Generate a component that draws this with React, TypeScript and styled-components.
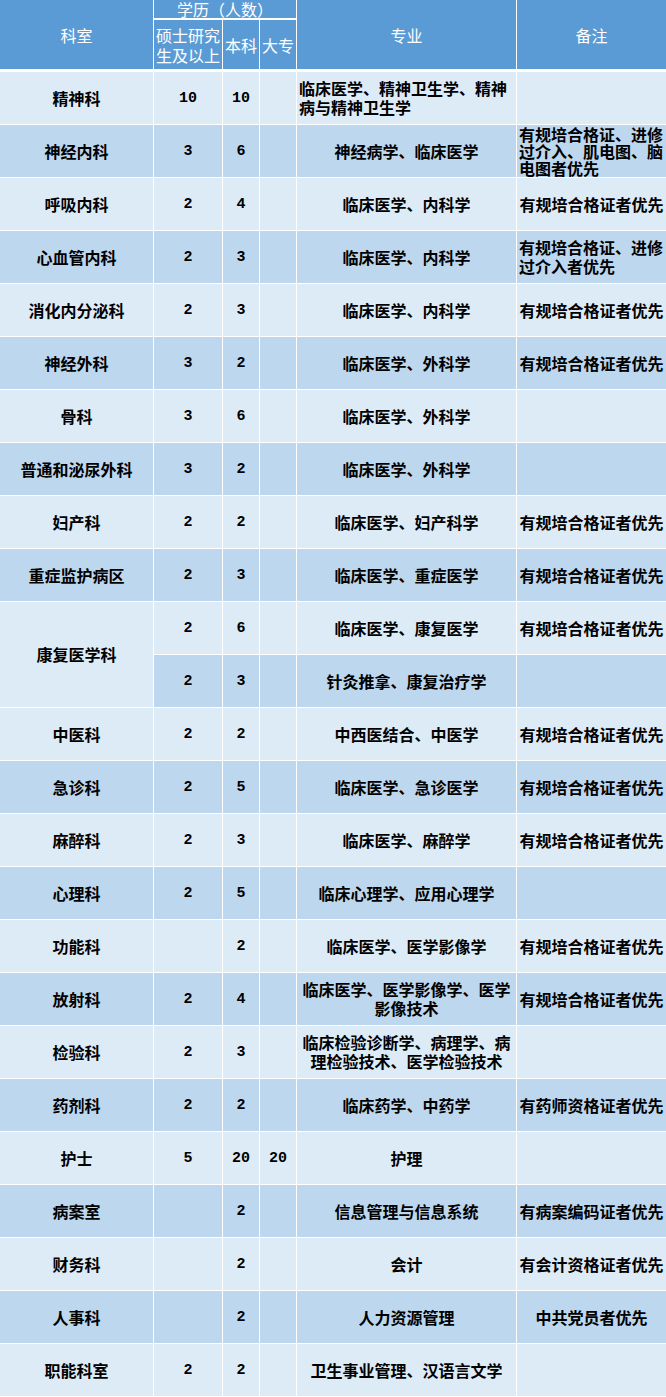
import styled, { createGlobalStyle } from 'styled-components';

const GlobalStyle = createGlobalStyle`
  *, *::before, *::after {
    box-sizing: border-box;
  }

  body {
    margin: 0;
    background: #fff;
    font-family: "Noto Sans CJK SC", "Liberation Sans", sans-serif;
  }
`;

type Row = {
  dept?: string;
  span?: number;
  master: string;
  bachelor: string;
  college: string;
  major: string;
  note: string;
  majorAlign?: 'left' | 'center';
  noteAlign?: 'left' | 'center';
};

const rows: Row[] = [
  { dept: '精神科', master: '10', bachelor: '10', college: '', major: '临床医学、精神卫生学、精神\n病与精神卫生学', note: '', majorAlign: 'left' },
  { dept: '神经内科', master: '3', bachelor: '6', college: '', major: '神经病学、临床医学', note: '有规培合格证、进修\n过介入、肌电图、脑\n电图者优先', noteAlign: 'left' },
  { dept: '呼吸内科', master: '2', bachelor: '4', college: '', major: '临床医学、内科学', note: '有规培合格证者优先' },
  { dept: '心血管内科', master: '2', bachelor: '3', college: '', major: '临床医学、内科学', note: '有规培合格证、进修\n过介入者优先', noteAlign: 'left' },
  { dept: '消化内分泌科', master: '2', bachelor: '3', college: '', major: '临床医学、内科学', note: '有规培合格证者优先' },
  { dept: '神经外科', master: '3', bachelor: '2', college: '', major: '临床医学、外科学', note: '有规培合格证者优先' },
  { dept: '骨科', master: '3', bachelor: '6', college: '', major: '临床医学、外科学', note: '' },
  { dept: '普通和泌尿外科', master: '3', bachelor: '2', college: '', major: '临床医学、外科学', note: '' },
  { dept: '妇产科', master: '2', bachelor: '2', college: '', major: '临床医学、妇产科学', note: '有规培合格证者优先' },
  { dept: '重症监护病区', master: '2', bachelor: '3', college: '', major: '临床医学、重症医学', note: '有规培合格证者优先' },
  { dept: '康复医学科', span: 2, master: '2', bachelor: '6', college: '', major: '临床医学、康复医学', note: '有规培合格证者优先' },
  { master: '2', bachelor: '3', college: '', major: '针灸推拿、康复治疗学', note: '' },
  { dept: '中医科', master: '2', bachelor: '2', college: '', major: '中西医结合、中医学', note: '有规培合格证者优先' },
  { dept: '急诊科', master: '2', bachelor: '5', college: '', major: '临床医学、急诊医学', note: '有规培合格证者优先' },
  { dept: '麻醉科', master: '2', bachelor: '3', college: '', major: '临床医学、麻醉学', note: '有规培合格证者优先' },
  { dept: '心理科', master: '2', bachelor: '5', college: '', major: '临床心理学、应用心理学', note: '' },
  { dept: '功能科', master: '', bachelor: '2', college: '', major: '临床医学、医学影像学', note: '有规培合格证者优先' },
  { dept: '放射科', master: '2', bachelor: '4', college: '', major: '临床医学、医学影像学、医学\n影像技术', note: '有规培合格证者优先' },
  { dept: '检验科', master: '2', bachelor: '3', college: '', major: '临床检验诊断学、病理学、病\n理检验技术、医学检验技术', note: '' },
  { dept: '药剂科', master: '2', bachelor: '2', college: '', major: '临床药学、中药学', note: '有药师资格证者优先' },
  { dept: '护士', master: '5', bachelor: '20', college: '20', major: '护理', note: '' },
  { dept: '病案室', master: '', bachelor: '2', college: '', major: '信息管理与信息系统', note: '有病案编码证者优先' },
  { dept: '财务科', master: '', bachelor: '2', college: '', major: '会计', note: '有会计资格证者优先' },
  { dept: '人事科', master: '', bachelor: '2', college: '', major: '人力资源管理', note: '中共党员者优先' },
  { dept: '职能科室', master: '2', bachelor: '2', college: '', major: '卫生事业管理、汉语言文学', note: '' },
];

const Table = styled.table`
  width: 666px;
  table-layout: fixed;
  border-collapse: separate;
  border-spacing: 0;
`;

const HeadCell = styled.th<{ $h: number; $bottom: number; $last?: boolean; $lh?: number }>`
  height: ${(p) => p.$h}px;
  padding: 0;
  background: #5b9bd5;
  color: #fff;
  font-size: 16px;
  font-weight: 400;
  line-height: ${(p) => p.$lh ?? 20}px;
  white-space: nowrap;
  text-align: center;
  vertical-align: middle;
  border-right: ${(p) => (p.$last ? 0 : 1)}px solid #fff;
  border-bottom: ${(p) => p.$bottom}px solid #fff;
`;

const BodyRow = styled.tr<{ $dark: boolean }>`
  background: ${(p) => (p.$dark ? '#bdd7ee' : '#ddebf7')};
`;

const Cell = styled.td<{ $align?: 'left' | 'center'; $num?: boolean; $last?: boolean; $bg?: string; $lh?: number }>`
  height: 53px;
  padding: 0 2px;
  color: #000;
  font-size: 16px;
  font-weight: 700;
  line-height: ${(p) => p.$lh ?? 19}px;
  white-space: pre;
  text-align: ${(p) => p.$align ?? 'center'};
  vertical-align: middle;
  border-right: ${(p) => (p.$last ? 0 : 1)}px solid #fff;
  border-bottom: 1px solid #fff;
  ${(p) => p.$bg && `background: ${p.$bg};`}
  ${(p) => p.$num && `font-family: "Liberation Mono", monospace; font-size: 15px;`}
`;

export default function App() {
  return (
    <>
      <GlobalStyle />
      <Table>
        <colgroup>
          <col style={{ width: 154 }} />
          <col style={{ width: 69 }} />
          <col style={{ width: 37 }} />
          <col style={{ width: 37 }} />
          <col style={{ width: 220 }} />
          <col style={{ width: 149 }} />
        </colgroup>
        <thead>
          <tr>
            <HeadCell rowSpan={2} $h={72} $bottom={3}>科室</HeadCell>
            <HeadCell colSpan={3} $h={20} $bottom={2} $lh={18}>学历（人数）</HeadCell>
            <HeadCell rowSpan={2} $h={72} $bottom={3}>专业</HeadCell>
            <HeadCell rowSpan={2} $h={72} $bottom={3} $last>备注</HeadCell>
          </tr>
          <tr>
            <HeadCell $h={52} $bottom={3}>硕士研究<br />生及以上</HeadCell>
            <HeadCell $h={52} $bottom={3}>本科</HeadCell>
            <HeadCell $h={52} $bottom={3}>大专</HeadCell>
          </tr>
        </thead>
        <tbody>
          {rows.map((r, i) => {
            const noteLines = r.note.split('\n').length;
            return (
              <BodyRow key={i} $dark={i % 2 === 1}>
                {r.dept && (
                  <Cell rowSpan={r.span} $bg={r.span ? '#ddebf7' : undefined}>
                    {r.dept}
                  </Cell>
                )}
                <Cell $num>{r.master}</Cell>
                <Cell $num>{r.bachelor}</Cell>
                <Cell $num>{r.college}</Cell>
                <Cell $align={r.majorAlign}>{r.major}</Cell>
                <Cell $align={r.noteAlign} $lh={noteLines > 2 ? 17 : 19} $last>
                  {r.note}
                </Cell>
              </BodyRow>
            );
          })}
        </tbody>
      </Table>
    </>
  );
}
